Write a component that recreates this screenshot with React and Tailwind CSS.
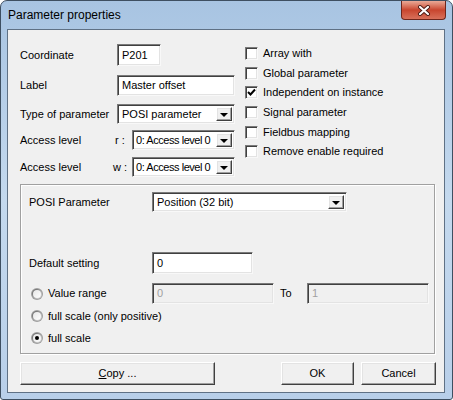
import React from 'react'

const sunken =
  'border border-t-[#7a7a7a] border-l-[#7a7a7a] border-r-[#f8f8f8] border-b-[#f8f8f8] shadow-[inset_1px_1px_0_#404040,inset_-1px_-1px_0_#e3e3e3]'
const raised =
  'border border-t-[#ffffff] border-l-[#ffffff] border-r-[#404040] border-b-[#404040] shadow-[inset_-1px_-1px_0_#a0a0a0,inset_1px_1px_0_#e3e3e3]'

function Field({ value, width, disabled = false }) {
  return (
    <div
      className={`h-full flex items-center pl-[4px] ${sunken} ${width} ${
        disabled ? 'bg-[#f0f0f0] text-[#a0a0a0]' : 'bg-white'
      }`}
    >
      {value}
    </div>
  )
}

function Select({ value, width, tight = false }) {
  return (
    <div className={`h-full flex bg-white p-[2px] ${sunken} ${width}`}>
      <div
        className={`flex-1 flex items-center overflow-hidden whitespace-nowrap ${
          tight ? 'pl-[1px] tracking-[-0.45px]' : 'pl-[2px]'
        }`}
      >
        {value}
      </div>
      <div className={`w-[16px] h-full shrink-0 flex items-center justify-center bg-[#f0f0f0] ${raised}`}>
        <div className="w-0 h-0 border-x-[4px] border-x-transparent border-t-[4px] border-t-black mt-[1px]" />
      </div>
    </div>
  )
}

function Check({ label, checked = false }) {
  return (
    <div className="h-[19.6px] flex items-center gap-[5px]">
      <div className={`w-[13px] h-[13px] bg-white flex items-center justify-center ${sunken}`}>
        {checked && (
          <svg width="9" height="9" viewBox="0 0 9 9">
            <path d="M1 4 L3.5 6.5 L8 1.5" fill="none" stroke="black" strokeWidth="2" />
          </svg>
        )}
      </div>
      <span>{label}</span>
    </div>
  )
}

function Radio({ checked = false }) {
  return (
    <div className="w-[12px] h-[12px] rounded-full bg-[#a0a0a0] p-[1px] shrink-0">
      <div className="w-full h-full rounded-full bg-gradient-to-br from-[#555555] to-[#f4f4f4] p-[1px]">
        <div className="w-full h-full rounded-full bg-gradient-to-br from-[#e6e6e6] to-white flex items-center justify-center">
          {checked && <div className="w-[4px] h-[4px] rounded-full bg-black" />}
        </div>
      </div>
    </div>
  )
}

function Button({ children, width, className = '' }) {
  return (
    <div className={`h-[23px] flex items-center justify-center bg-[#f0f0f0] ${raised} ${width} ${className}`}>
      {children}
    </div>
  )
}

export default function App() {
  return (
    <div className="w-[453px] h-[400px] bg-white">
      <div className="relative w-[453px] h-[400px] rounded-t-[7px] rounded-b-[3px] border border-[#3e4f61] bg-gradient-to-b from-[#a8c4e2] via-[#c4d9ee] to-[#b8cfe9] font-['Liberation_Sans',sans-serif] text-[11px] leading-[13px] text-black">
        {/* title bar */}
        <div className="h-[28px] flex items-center pl-[7px] pt-[1px] text-[12px]">Parameter properties</div>
        <div className="absolute top-0 right-[6px] w-[45px] h-[19px] rounded-b-[4px] border border-t-0 border-[#6e261c] bg-gradient-to-b from-[#e9a997] via-[#c8452e] to-[#d8705a] flex items-center justify-center">
          <svg width="14" height="11" viewBox="0 0 14 11">
            <path d="M3 2 L11 9 M11 2 L3 9" stroke="#4b1a14" strokeWidth="4" strokeLinecap="round" />
            <path d="M3 2 L11 9 M11 2 L3 9" stroke="white" strokeWidth="2.2" strokeLinecap="round" />
          </svg>
        </div>

        {/* client area */}
        <div className="ml-[6px] w-[438px] h-[364px] border border-[#5f7185] bg-[#f0f0f0]">
          <div className="pl-[12px] pt-[14px]">
            <div className="flex">
              <div className="w-[215px] flex flex-col">
                <div className="h-[22px] flex items-center">
                  <span className="w-[97px]">Coordinate</span>
                  <Field value="P201" width="w-[44px]" />
                </div>
                <div className="h-[21px] mt-[9px] flex items-center">
                  <span className="w-[97px]">Label</span>
                  <Field value="Master offset" width="w-[118px]" />
                </div>
                <div className="h-[20px] mt-[8px] flex items-center">
                  <span className="w-[97px]">Type of parameter</span>
                  <Select value="POSI parameter" width="w-[118px]" />
                </div>
                <div className="h-[20px] mt-[6px] flex items-center">
                  <span className="w-[93px]">Access level</span>
                  <span className="w-[19px] pl-[2px]">r :</span>
                  <Select value="0: Access level 0" width="w-[103px]" tight />
                </div>
                <div className="h-[20px] mt-[7px] flex items-center">
                  <span className="w-[93px]">Access level</span>
                  <span className="w-[19px]">w :</span>
                  <Select value="0: Access level 0" width="w-[103px]" tight />
                </div>
              </div>
              <div className="ml-[10px] flex flex-col">
                <Check label="Array with" />
                <Check label="Global parameter" />
                <Check label="Independent on instance" checked />
                <Check label="Signal parameter" />
                <Check label="Fieldbus mapping" />
                <Check label="Remove enable required" />
              </div>
            </div>

            {/* group box */}
            <div className="mt-[7px] w-[415px] h-[170px] border border-[#a0a0a0] shadow-[inset_1px_1px_0_#ffffff,1px_1px_0_#ffffff] pl-[8px]">
              <div className="h-[20px] mt-[7px] flex items-center">
                <span className="w-[123px]">POSI Parameter</span>
                <Select value="Position (32 bit)" width="w-[195px]" />
              </div>
              <div className="h-[22px] mt-[40px] flex items-center">
                <span className="w-[123px]">Default setting</span>
                <Field value="0" width="w-[101px]" />
              </div>
              <div className="h-[21px] mt-[9px] flex items-center">
                <div className="w-[123px] flex items-center gap-[5px] pl-[2px]">
                  <Radio />
                  <span>Value range</span>
                </div>
                <Field value="0" width="w-[122px]" disabled />
                <span className="w-[33px] pl-[6px]">To</span>
                <Field value="1" width="w-[122px]" disabled />
              </div>
              <div className="h-[20px] mt-[2px] flex items-center gap-[5px] pl-[2px]">
                <Radio />
                <span>full scale (only positive)</span>
              </div>
              <div className="h-[20px] mt-[2px] flex items-center gap-[5px] pl-[2px]">
                <Radio checked />
                <span>full scale</span>
              </div>
            </div>

            {/* buttons */}
            <div className="mt-[8px] flex">
              <Button width="w-[195px]">
                <span>
                  <span className="underline">C</span>opy ...
                </span>
              </Button>
              <Button width="w-[73px]" className="ml-[66px]">OK</Button>
              <Button width="w-[75px]" className="ml-[7px]">Cancel</Button>
            </div>
          </div>
        </div>
      </div>
    </div>
  )
}
